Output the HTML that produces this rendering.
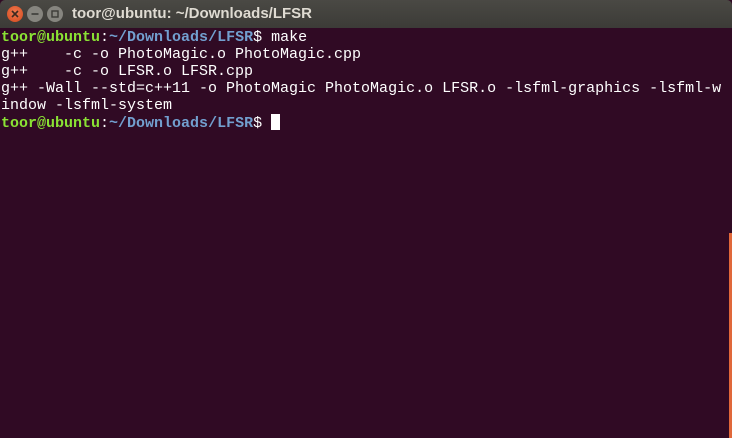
<!DOCTYPE html>
<html><head><style>
html,body{margin:0;padding:0;width:732px;height:438px;overflow:hidden;background:#300a24;}
.tb{position:absolute;left:0;top:0;width:732px;height:28px;background:linear-gradient(#4a4944,#3c3b37);border-radius:5px 5px 0 0;}
.title{position:absolute;left:72px;top:5px;font:bold 15px "Liberation Sans",sans-serif;color:#dfdbd2;}
.btn{position:absolute;top:6px;width:16px;height:16px;border-radius:50%;}
.term{position:absolute;left:1px;top:29px;font:15px/17px "Liberation Mono",monospace;color:#fff;white-space:pre;}
.u{color:#8ae234;font-weight:bold}.p{color:#729fcf;font-weight:bold}
.cur{display:inline-block;width:9px;height:16px;background:#fff;vertical-align:-3px}
.sb{position:absolute;left:729px;top:233px;width:3px;height:205px;background:#e0683a;}
</style></head><body>
<div class="tb">
<div class="btn" style="left:7px;background:radial-gradient(circle at 50% 40%,#f07a50,#d2481c)"><svg width="16" height="16"><path d="M5 5L11 11M11 5L5 11" stroke="#3c2a20" stroke-width="1.6"/></svg></div>
<div class="btn" style="left:27px;background:#86857f"><svg width="16" height="16"><path d="M4.5 8H11.5" stroke="#3c3b37" stroke-width="1.6"/></svg></div>
<div class="btn" style="left:47px;background:#86857f"><svg width="16" height="16"><rect x="5" y="5" width="6" height="6" fill="none" stroke="#3c3b37" stroke-width="1.4"/></svg></div>
<div class="title">toor@ubuntu: ~/Downloads/LFSR</div>
</div>
<div class="term"><span class="u">toor@ubuntu</span>:<span class="p">~/Downloads/LFSR</span>$ make
g++    -c -o PhotoMagic.o PhotoMagic.cpp
g++    -c -o LFSR.o LFSR.cpp
g++ -Wall --std=c++11 -o PhotoMagic PhotoMagic.o LFSR.o -lsfml-graphics -lsfml-w
indow -lsfml-system
<span class="u">toor@ubuntu</span>:<span class="p">~/Downloads/LFSR</span>$ <span class="cur"></span></div>
<div class="sb"></div>
</body></html>
